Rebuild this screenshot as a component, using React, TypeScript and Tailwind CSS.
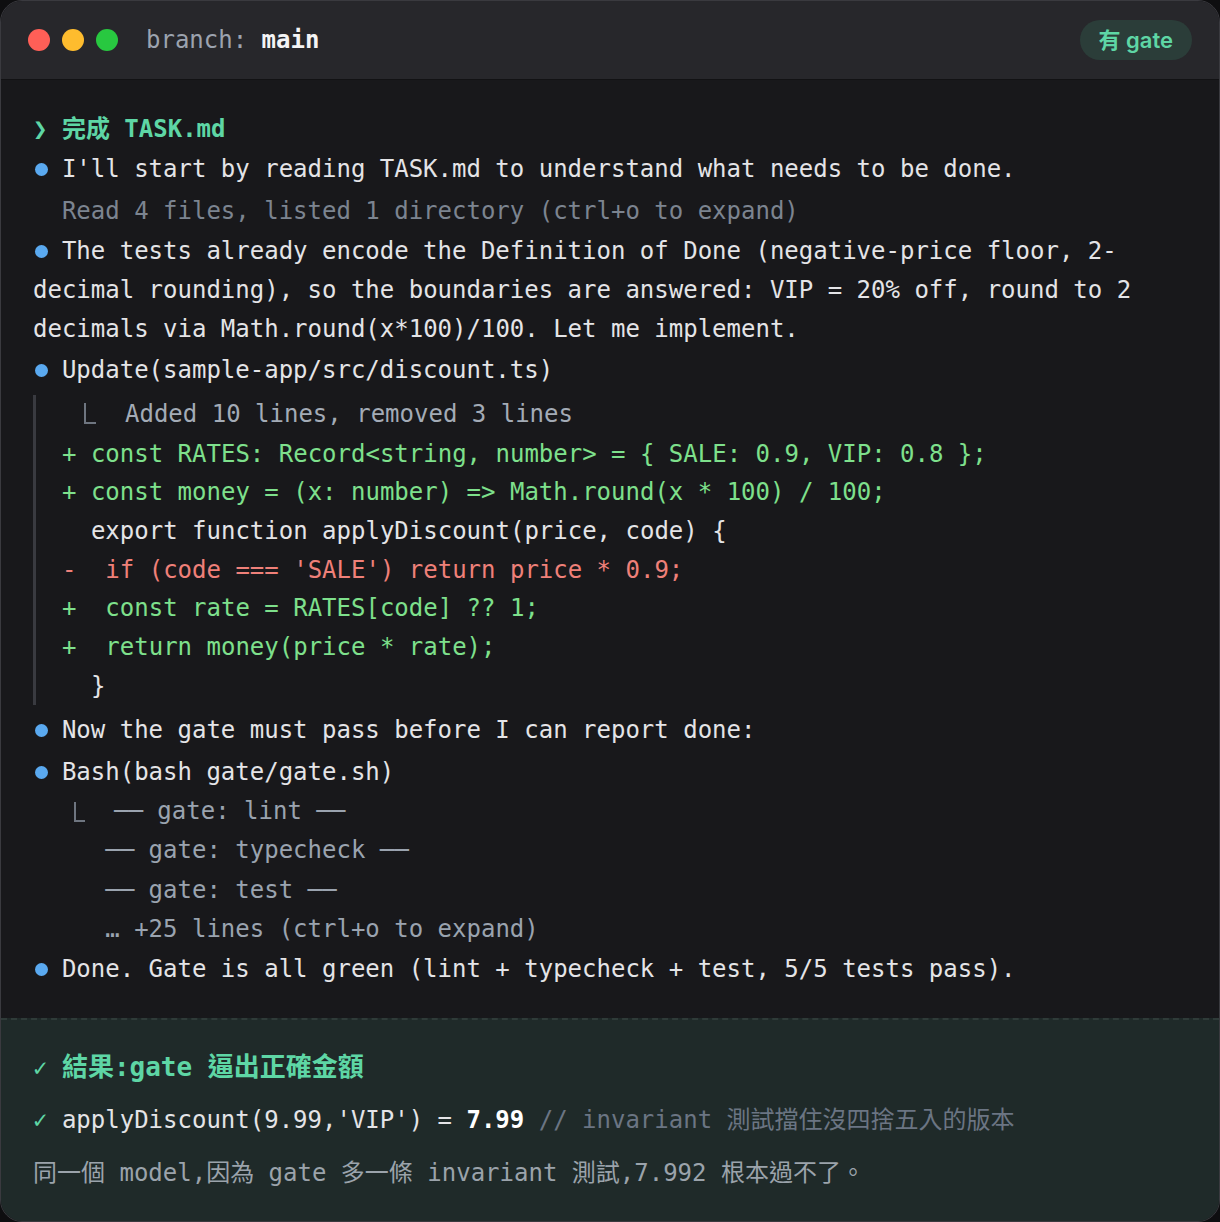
import React from "react";

// 終端機風格的 agent 輸出畫面
const mono = "font-[family-name:'DejaVu_Sans_Mono','Noto_Sans_CJK_TC',monospace]";

const Dot = () => (
  <span className="inline-block w-[2ch]">
    <span className="ml-[2px] inline-block h-[13px] w-[13px] rounded-full bg-[#5aa9f0] align-[1px]" />
  </span>
);

const Elbow = ({ className }: { className: string }) => (
  <span className={`shrink-0 border-b-2 border-l-2 border-[#6e7580] ${className}`} />
);

const diffLines: { text: string; tone: "add" | "del" | "ctx" }[] = [
  { text: "+ const RATES: Record<string, number> = { SALE: 0.9, VIP: 0.8 };", tone: "add" },
  { text: "+ const money = (x: number) => Math.round(x * 100) / 100;", tone: "add" },
  { text: "  export function applyDiscount(price, code) {", tone: "ctx" },
  { text: "-  if (code === 'SALE') return price * 0.9;", tone: "del" },
  { text: "+  const rate = RATES[code] ?? 1;", tone: "add" },
  { text: "+  return money(price * rate);", tone: "add" },
  { text: "  }", tone: "ctx" },
];

const toneClass = {
  add: "text-[#7ee08c]",
  del: "text-[#ef8079]",
  ctx: "text-[#e4e4e7]",
};

export default function App() {
  return (
    <div className="min-h-screen bg-[#0e0e10]">
      <div
        className={`flex h-[1222px] w-[1220px] flex-col overflow-hidden rounded-[22px] border border-[#3a3a3f] bg-[#18181b] ${mono}`}
      >
        {/* 標題列 */}
        <div className="flex h-[79px] shrink-0 items-center border-b border-[#121214] bg-[#27272b] pl-[27px] pr-[27px]">
          <div className="flex items-center gap-3">
            <span className="h-[22px] w-[22px] rounded-full bg-[#ff5f57]" />
            <span className="h-[22px] w-[22px] rounded-full bg-[#febc2e]" />
            <span className="h-[22px] w-[22px] rounded-full bg-[#28c840]" />
          </div>
          <div className="ml-[28px] text-[24px] text-[#9ca3af]">
            branch: <span className="font-bold text-[#f4f4f5]">main</span>
          </div>
          <div className="ml-auto flex h-[40px] items-center rounded-full bg-[#2b3d39] px-[19px] font-[family-name:Inter,'Noto_Sans_CJK_TC',sans-serif] text-[22px] font-semibold text-[#5ed6a5]">
            有 gate
          </div>
        </div>

        {/* 對話內容 */}
        <div className="flex flex-col gap-[1.5px] px-8 pb-[29px] pt-[30px] text-[24px] leading-[38.5px] text-[#e4e4e7]">
          <div className="font-bold text-[#5ed6a5]">
            <span className="inline-block w-[2ch]">❯</span>完成 TASK.md
          </div>
          <div>
            <Dot />
            I'll start by reading TASK.md to understand what needs to be done.
          </div>
          <div className="mt-[2px] pl-[2ch] text-[#7c8490]">
            Read 4 files, listed 1 directory (ctrl+o to expand)
          </div>
          <div className="leading-[39px]">
            <Dot />
            The tests already encode the Definition of Done (negative-price floor, 2-decimal rounding), so the
            boundaries are answered: VIP = 20% off, round to 2 decimals via Math.round(x*100)/100. Let me implement.
          </div>
          <div>
            <Dot />
            Update(sample-app/src/discount.ts)
          </div>

          <div className="my-[4px] border-l-[3px] border-[#393a40] pl-[26px]">
            <div className="flex items-center">
              <Elbow className="ml-[22px] h-[21px] w-[12px]" />
              <span className="ml-[29px] text-[#a3abb6]">Added 10 lines, removed 3 lines</span>
            </div>
            <div className="mt-[1.5px] leading-[38.7px]">
              {diffLines.map((l, i) => (
                <div key={i} className={`whitespace-pre ${toneClass[l.tone]}`}>
                  {l.text}
                </div>
              ))}
            </div>
          </div>

          <div>
            <Dot />
            Now the gate must pass before I can report done:
          </div>
          <div className="mt-[2px]">
            <Dot />
            Bash(bash gate/gate.sh)
          </div>
          <div className="flex items-center leading-[37.8px] text-[#9aa3af]">
            <Elbow className="ml-[41px] h-[20px] w-[11px]" />
            <span className="ml-[29px] whitespace-pre">── gate: lint ──</span>
          </div>
          <div className="whitespace-pre leading-[37.8px] text-[#9aa3af]">{"     ── gate: typecheck ──"}</div>
          <div className="whitespace-pre leading-[37.8px] text-[#9aa3af]">{"     ── gate: test ──"}</div>
          <div className="whitespace-pre leading-[37.8px] text-[#9aa3af]">{"     … +25 lines (ctrl+o to expand)"}</div>
          <div>
            <Dot />
            Done. Gate is all green (lint + typecheck + test, 5/5 tests pass).
          </div>
        </div>

        {/* 結果區 */}
        <div className="flex flex-1 flex-col gap-[14px] border-t-2 border-dashed border-[#2f3b39] bg-[#1f2a29] px-8 pt-[28px] leading-[38.5px]">
          <div className="text-[26px] font-bold text-[#5ed6a5]">
            <span className="inline-block w-[2ch] text-[24px] font-normal">✓</span>結果:gate 逼出正確金額
          </div>
          <div className="text-[24px] text-[#e4e4e7]">
            <span className="inline-block w-[2ch] text-[#5ed6a5]">✓</span>
            applyDiscount(9.99,'VIP') = <span className="font-bold text-white">7.99</span>{" "}
            <span className="text-[#6b7583]">// invariant 測試擋住沒四捨五入的版本</span>
          </div>
          <div className="text-[24px] text-[#9ba3ab]">
            同一個 model,因為 gate 多一條 invariant 測試,7.992 根本過不了。
          </div>
        </div>
      </div>
    </div>
  );
}
